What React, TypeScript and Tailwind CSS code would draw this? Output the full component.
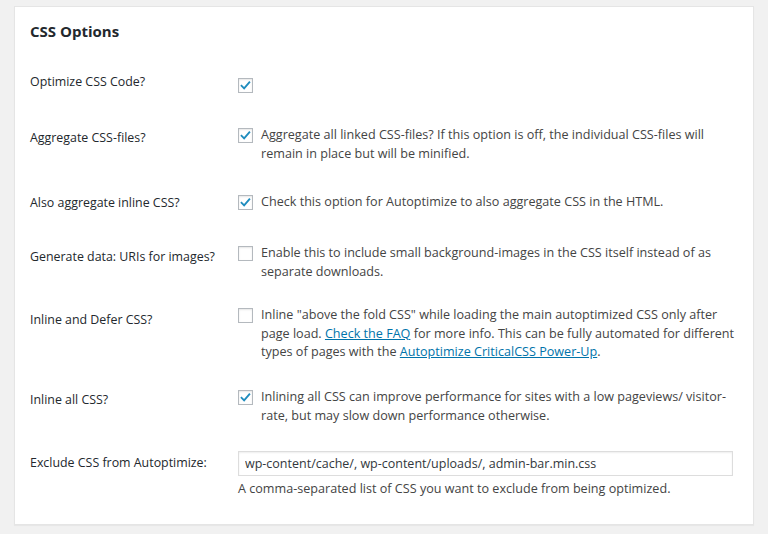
import React from "react";

const Check = ({ checked }: { checked: boolean }) => (
  <span className="inline-flex h-[15px] w-[15px] shrink-0 items-center justify-center border border-[#b4b9be] bg-white shadow-[inset_0_1px_2px_rgba(0,0,0,0.1)]">
    {checked && (
      <svg viewBox="0 0 16 16" className="h-[13px] w-[13px]">
        <path d="M3.2 8.4l3.1 3.1 6.4-7.4" stroke="#1e8cbe" strokeWidth="2.3" fill="none" strokeLinecap="square" />
      </svg>
    )}
  </span>
);

const Link = ({ children }: { children: React.ReactNode }) => (
  <a href="#" className="text-[#0073aa] underline">{children}</a>
);

export default function App() {
  return (
    <div className="h-[534px] w-[768px] bg-[#f1f1f1] pl-[14px] pt-[6px] text-[12.6px] text-[#444]" style={{ fontFamily: '"Open Sans", "Noto Sans", sans-serif' }}>
      <div className="h-[519px] w-[740px] border border-[#e5e5e5] bg-white pl-[15px] pt-[14px] shadow-[0_1px_1px_rgba(0,0,0,0.04)]">
        <h2 className="h-[20px] text-[15px] font-bold leading-[20px] text-[#23282d]">CSS Options</h2>

        <div className="mt-[32px] flex flex-col">
          {/* Row 1 */}
          <div className="flex h-[53px]">
            <div className="w-[208px] shrink-0 text-[12.4px] leading-[18px] text-[#23282d]">Optimize CSS Code?</div>
            <div className="mt-[5px]">
              <Check checked />
            </div>
          </div>

          {/* Row 2 */}
          <div className="flex h-[67px]">
            <div className="mt-[3px] w-[208px] shrink-0 text-[12.4px] leading-[18px] text-[#23282d]">Aggregate CSS-files?</div>
            <div className="flex gap-[8px] leading-[18.5px]">
              <span className="mt-[2px]"><Check checked /></span>
              <span>
                Aggregate all linked CSS-files? If this option is off, the individual CSS-files will
                <br />
                remain in place but will be minified.
              </span>
            </div>
          </div>

          {/* Row 3 */}
          <div className="flex h-[51px]">
            <div className="mt-[1px] w-[208px] shrink-0 text-[12.4px] leading-[18px] text-[#23282d]">Also aggregate inline CSS?</div>
            <div className="flex gap-[8px] leading-[18.5px]">
              <span className="mt-[2px]"><Check checked /></span>
              <span>Check this option for Autoptimize to also aggregate CSS in the HTML.</span>
            </div>
          </div>

          {/* Row 4 */}
          <div className="flex h-[62px]">
            <div className="mt-[4px] w-[208px] shrink-0 text-[12.4px] leading-[18px] text-[#23282d]">Generate data: URIs for images?</div>
            <div className="flex gap-[8px] leading-[18.5px]">
              <span className="mt-[2px]"><Check checked={false} /></span>
              <span>
                Enable this to include small background-images in the CSS itself instead of as
                <br />
                separate downloads.
              </span>
            </div>
          </div>

          {/* Row 5 */}
          <div className="flex h-[82px]">
            <div className="mt-[5px] w-[208px] shrink-0 text-[12.4px] leading-[18px] text-[#23282d]">Inline and Defer CSS?</div>
            <div className="flex gap-[8px] leading-[18.5px]">
              <span className="mt-[2px]"><Check checked={false} /></span>
              <span>
                Inline "above the fold CSS" while loading the main autoptimized CSS only after
                <br />
                page load. <Link>Check the FAQ</Link> for more info. This can be fully automated for different
                <br />
                types of pages with the <Link>Autoptimize CriticalCSS Power-Up</Link>.
              </span>
            </div>
          </div>

          {/* Row 6 */}
          <div className="flex h-[63px]">
            <div className="mt-[3px] w-[208px] shrink-0 text-[12.4px] leading-[18px] text-[#23282d]">Inline all CSS?</div>
            <div className="flex gap-[8px] leading-[18.5px]">
              <span className="mt-[2px]"><Check checked /></span>
              <span>
                Inlining all CSS can improve performance for sites with a low pageviews/ visitor-
                <br />
                rate, but may slow down performance otherwise.
              </span>
            </div>
          </div>

          {/* Row 7 */}
          <div className="flex">
            <div className="mt-[3px] w-[208px] shrink-0 text-[12.4px] leading-[18px] text-[#23282d]">Exclude CSS from Autoptimize:</div>
            <div className="flex flex-col">
              <input
                type="text"
                readOnly
                value="wp-content/cache/, wp-content/uploads/, admin-bar.min.css"
                className="h-[25px] w-[495px] border border-[#ddd] bg-white px-[6px] text-[12.5px] text-[#32373c] shadow-[inset_0_1px_2px_rgba(0,0,0,0.07)] outline-none"
                style={{ fontFamily: '"Open Sans", "Noto Sans", sans-serif' }}
              />
              <span className="mt-[4px] text-[12.6px] leading-[18px]">A comma-separated list of CSS you want to exclude from being optimized.</span>
            </div>
          </div>
        </div>
      </div>
    </div>
  );
}
